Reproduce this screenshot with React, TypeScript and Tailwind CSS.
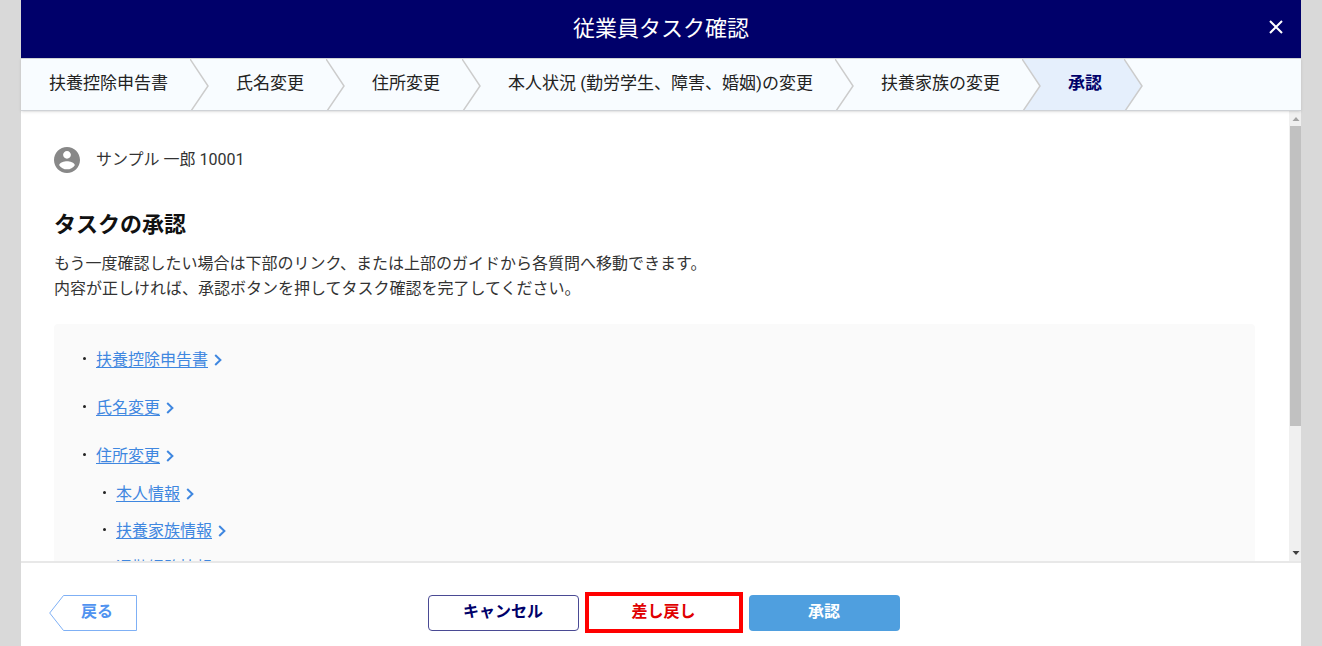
import clsx from 'clsx';

interface LinkItem {
  label: string;
  children?: LinkItem[];
}

const steps = [
  '扶養控除申告書',
  '氏名変更',
  '住所変更',
  '本人状況 (勤労学生、障害、婚姻)の変更',
  '扶養家族の変更',
  '承認',
];

const currentStep = 5;

const links: LinkItem[] = [
  { label: '扶養控除申告書' },
  { label: '氏名変更' },
  {
    label: '住所変更',
    children: [{ label: '本人情報' }, { label: '扶養家族情報' }, { label: '通勤経路情報' }],
  },
];

const stepColor = (index: number) => (index === currentStep ? '#e5effc' : '#f8fcff');

function StepArrow({ index }: { index: number }) {
  return (
    <svg width="19" height="52" viewBox="0 0 19 52" className="shrink-0" aria-hidden="true">
      <rect width="19" height="52" fill={stepColor(index + 1)} />
      <path d="M0 0 L18 27 L1 52 H0 Z" fill={stepColor(index)} />
      <path d="M0 0 L18 27 L1 52" fill="none" stroke="#cccccc" strokeWidth="1.5" />
    </svg>
  );
}

function StepNav() {
  return (
    <nav className="relative z-10 border-y border-[#cfd2d6] bg-[#f8fcff] shadow-sm">
      <ol className="flex h-[51px] overflow-hidden pl-px">
        {steps.map((step, i) => (
          <li key={step} className="flex shrink-0">
            <button
              type="button"
              aria-current={i === currentStep ? 'step' : undefined}
              className={clsx(
                'h-full pr-[22px] pb-1 pl-[27px] text-[17px] leading-6 whitespace-nowrap',
                i === currentStep ? 'bg-[#e5effc] font-bold text-[#00006a]' : 'text-[#222]'
              )}
            >
              {step}
            </button>
            <StepArrow index={i} />
          </li>
        ))}
      </ol>
    </nav>
  );
}

function TaskLink({ label }: { label: string }) {
  return (
    <div className="flex h-6 items-center">
      <span className="mr-[10px] mb-[3px] size-[3px] rounded-full bg-[#222]" />
      <a href="#" className="flex items-center gap-1.5 text-[#3f87e0]">
        <span className="underline underline-offset-2">{label}</span>
        <svg width="8" height="12" viewBox="0 0 8 12" fill="none" aria-hidden="true">
          <path d="M1.2 1 L6.4 6 L1.2 11" stroke="currentColor" strokeWidth="2" />
        </svg>
      </a>
    </div>
  );
}

function Scrollbar() {
  return (
    <div className="flex w-3 shrink-0 flex-col items-end bg-[#f0f0f0]" aria-hidden="true">
      <svg width="12" height="15" viewBox="0 0 12 15">
        <path d="M3.5 10 L7 6 L10.5 10 Z" fill="#a3a3a3" />
      </svg>
      <div className="h-2/3 w-[11px] bg-[#c1c1c1]" />
      <svg width="12" height="15" viewBox="0 0 12 15" className="mt-auto">
        <path d="M3.5 5 L7 9 L10.5 5 Z" fill="#404040" />
      </svg>
    </div>
  );
}

export default function App() {
  return (
    <div className="h-screen bg-[#d9d9d9] px-[21px] font-['Roboto','Noto_Sans_CJK_JP',sans-serif] text-[#333]">
      <div className="flex h-full flex-col bg-white" role="dialog" aria-labelledby="dialog-title">
        <header className="grid h-[58px] shrink-0 grid-cols-[1fr_auto_1fr] items-center bg-[#00006a] px-4 text-white">
          <h1 id="dialog-title" className="col-start-2 text-[22px] leading-8">
            従業員タスク確認
          </h1>
          <button type="button" aria-label="閉じる" className="justify-self-end px-[2px] pb-1">
            <svg width="14" height="14" viewBox="0 0 14 14" fill="none" aria-hidden="true">
              <path d="M1 1 L13 13 M13 1 L1 13" stroke="currentColor" strokeWidth="2" />
            </svg>
          </button>
        </header>

        <StepNav />

        <div className="flex min-h-0 flex-1">
          <main className="min-w-0 flex-1 overflow-hidden pt-9 pr-[34px] pl-[33px]">
            <div className="flex items-center gap-4">
              <svg width="26" height="26" viewBox="2 2 20 20" fill="#888888" aria-hidden="true">
                <path d="M12 2C6.48 2 2 6.48 2 12s4.48 10 10 10 10-4.48 10-10S17.52 2 12 2zm0 3c1.66 0 3 1.34 3 3s-1.34 3-3 3-3-1.34-3-3 1.34-3 3-3zm0 14.2c-2.5 0-4.71-1.28-6-3.22.03-1.99 4-3.08 6-3.08 1.99 0 5.97 1.09 6 3.08-1.29 1.94-3.5 3.22-6 3.22z" />
              </svg>
              <span className="leading-6">サンプル 一郎 10001</span>
            </div>

            <h2 className="mt-9 text-[22px] leading-8 font-bold text-[#111]">タスクの承認</h2>
            <p className="mt-[10px] leading-[25px]">
              もう一度確認したい場合は下部のリンク、または上部のガイドから各質問へ移動できます。
              <br />
              内容が正しければ、承認ボタンを押してタスク確認を完了してください。
            </p>

            <ul className="mt-[23px] flex flex-col gap-6 rounded bg-[#fafafa] px-[29px] py-6">
              {links.map((link) => (
                <li key={link.label}>
                  <TaskLink label={link.label} />
                  {link.children && (
                    <ul className="mt-[14px] ml-5 flex flex-col gap-[13px]">
                      {link.children.map((child) => (
                        <li key={child.label}>
                          <TaskLink label={child.label} />
                        </li>
                      ))}
                    </ul>
                  )}
                </li>
              ))}
            </ul>
          </main>
          <Scrollbar />
        </div>

        <footer className="grid shrink-0 grid-cols-[1fr_auto_1fr] items-center border-t-2 border-[#e8e8e8] pt-[29px] pr-[23px] pb-[13px] pl-7 font-bold">
          <button
            type="button"
            className="relative h-9 w-[88px] justify-self-start pb-[2px] pl-2 text-[#5093f0]"
          >
            <svg
              className="absolute inset-0"
              width="88"
              height="36"
              viewBox="0 0 88 36"
              fill="none"
              aria-hidden="true"
            >
              <path d="M14.5 0.5 H87.5 V35.5 H14.5 L0.7 18 Z" stroke="#7fb0f5" />
            </svg>
            戻る
          </button>
          <div className="flex items-center gap-[6px]">
            <button
              type="button"
              className="h-9 w-[151px] rounded border border-[#4a4a94] pb-[2px] text-[#00006a]"
            >
              キャンセル
            </button>
            <button
              type="button"
              className="h-[41px] w-[158px] border-4 border-[#ff0000] pb-[2px] text-[#e00000]"
            >
              差し戻し
            </button>
            <button
              type="button"
              className="h-9 w-[151px] rounded bg-[#4f9fdf] pb-[2px] text-white"
            >
              承認
            </button>
          </div>
        </footer>
      </div>
    </div>
  );
}
